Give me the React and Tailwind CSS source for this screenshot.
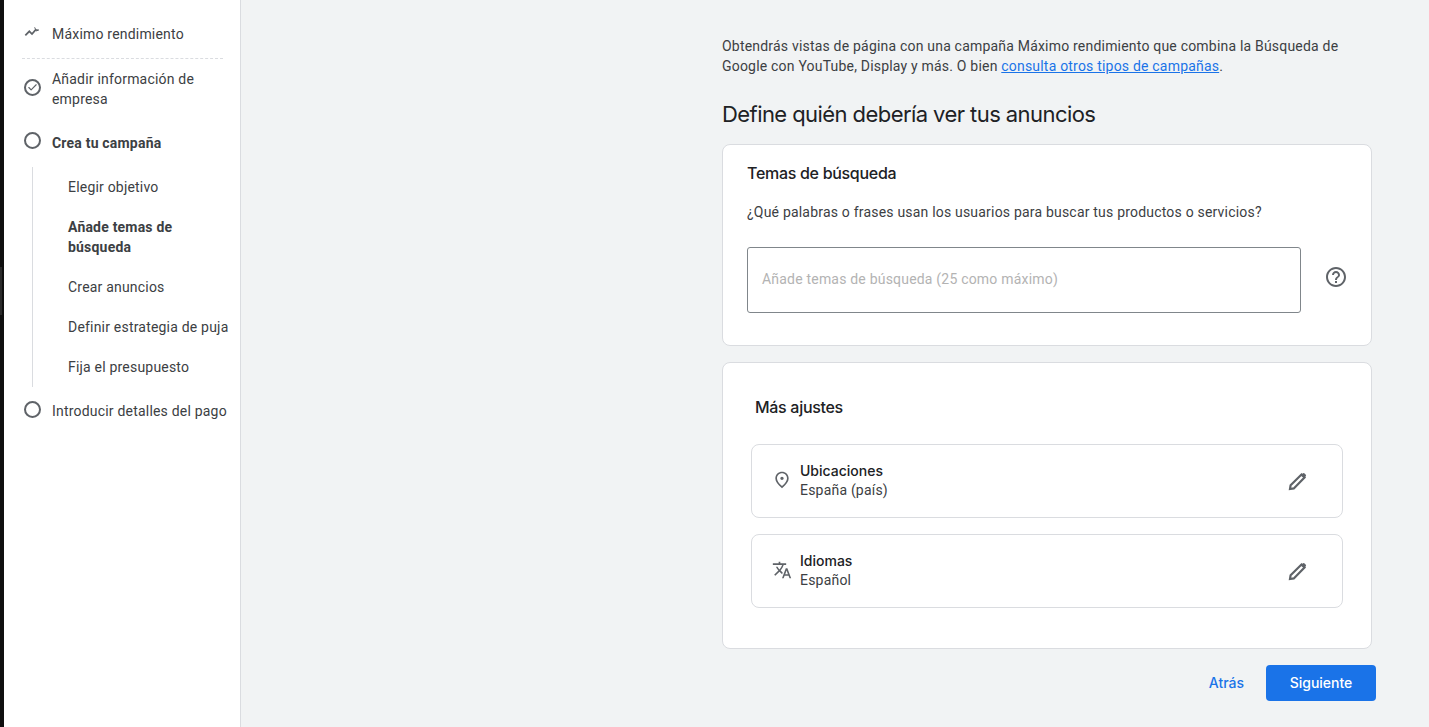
import { Check } from "lucide-react";

const heading = "font-['Inter',sans-serif]";

const Circle = ({ checked }) => (
  <span className="relative -top-[2px] w-[17px] h-[17px] rounded-full border-2 border-[#5f6368] flex items-center justify-center shrink-0">
    {checked && <Check size={11} strokeWidth={2.5} className="text-[#5f6368]" />}
  </span>
);

const SubStep = ({ children, bold }) => (
  <div className={`pl-[35px] py-[10px] leading-5 ${bold ? "font-bold" : ""}`}>{children}</div>
);

const Sidebar = () => (
  <div className="w-[237px] shrink-0 bg-white border-r border-[#dadce0] pt-6 pr-[9px] text-sm text-[#3c4043]">
    <div className="flex items-center gap-[12px] pl-[20px] h-5">
      <svg width="16" height="16" viewBox="0 0 24 24" fill="none" stroke="#5f6368" strokeWidth="2.6" className="relative -top-[2px]">
        <path d="M2 17l6-6 4 4 6-7" />
        <path d="M16 5l1.5 3.5L22 9l-3.5 1.5" fill="#5f6368" strokeWidth="1.5" />
      </svg>
      <span>Máximo rendimiento</span>
    </div>
    <div className="ml-[18px] mr-[8px] mt-[14px] border-t border-dashed border-[#dadce0]" />
    <div className="flex items-center gap-[11px] pl-5 mt-[10px] leading-5">
      <Circle checked />
      <span className="w-[175px]">Añadir información de empresa</span>
    </div>
    <div className="flex items-center gap-[11px] pl-5 mt-[23px] leading-5 font-bold">
      <Circle />
      <span className="relative top-px">Crea tu campaña</span>
    </div>
    <div className="ml-7 mt-[15px] border-l border-[#dadce0] whitespace-nowrap">
      <SubStep>Elegir objetivo</SubStep>
      <SubStep bold>
        Añade temas de
        <br />
        búsqueda
      </SubStep>
      <SubStep>Crear anuncios</SubStep>
      <SubStep>Definir estrategia de puja</SubStep>
      <SubStep>Fija el presupuesto</SubStep>
    </div>
    <div className="flex items-center gap-[11px] pl-5 mt-[14px] leading-5">
      <Circle />
      <span className="whitespace-nowrap">Introducir detalles del pago</span>
    </div>
  </div>
);

const Pencil = () => (
  <svg width="20" height="20" viewBox="0 0 20 20" fill="none" className="shrink-0">
    <path d="M2 18l.6-3.8L13.5 3.5l3 3L5.8 17.4 2 18z" stroke="#5f6368" strokeWidth="2.2" />
    <path d="M13 4l1.6-1.6a1.4 1.4 0 0 1 2 0l1 1a1.4 1.4 0 0 1 0 2L16 7z" fill="#5f6368" />
  </svg>
);

const PlaceIcon = () => (
  <svg width="20" height="20" viewBox="0 0 24 24" fill="#5f6368">
    <path d="M12 12c-1.1 0-2-.9-2-2s.9-2 2-2 2 .9 2 2-.9 2-2 2zm6-1.8C18 6.57 15.35 4 12 4s-6 2.57-6 6.2c0 2.34 1.95 5.44 6 9.14 4.05-3.7 6-6.8 6-9.14zM12 2c4.2 0 8 3.22 8 8.2 0 3.32-2.67 7.25-8 11.8-5.33-4.55-8-8.48-8-11.8C4 5.22 7.8 2 12 2z" />
  </svg>
);

const TranslateIcon = () => (
  <svg width="20" height="20" viewBox="0 0 24 24" fill="#5f6368">
    <path d="M12.87 15.07l-2.54-2.51.03-.03c1.74-1.94 2.98-4.17 3.71-6.53H17V4h-7V2H8v2H1v1.99h11.17C11.5 7.92 10.44 9.75 9 11.35 8.07 10.32 7.3 9.19 6.69 8h-2c.73 1.63 1.73 3.17 2.98 4.56l-5.09 5.02L4 19l5-5 3.11 3.11.76-2.04zM18.5 10h-2L12 22h2l1.12-3h4.75L21 22h2l-4.5-12zm-2.62 7l1.62-4.33L19.12 17h-3.24z" />
  </svg>
);

const HelpIcon = () => (
  <svg width="24" height="24" viewBox="0 0 24 24" fill="#5f6368" className="shrink-0 relative -top-[3px]">
    <path d="M11 18h2v-2h-2v2zm1-16C6.48 2 2 6.48 2 12s4.48 10 10 10 10-4.48 10-10S17.52 2 12 2zm0 18c-4.41 0-8-3.59-8-8s3.59-8 8-8 8 3.59 8 8-3.59 8-8 8zm0-14c-2.21 0-4 1.79-4 4h2c0-1.1.9-2 2-2s2 .9 2 2c0 2-3 1.75-3 5h2c0-2.25 3-2.5 3-5 0-2.21-1.79-4-4-4z" />
  </svg>
);

const SettingRow = ({ icon, title, value }) => (
  <div className="h-[74px] border border-[#dadce0] rounded-lg flex items-center pl-[20px] pr-[34px]">
    <div className="w-[28px] shrink-0 relative -top-px">{icon}</div>
    <div className="flex-1 text-sm text-[#3c4043]">
      <div className={`${heading} text-sm leading-[18px] tracking-normal font-medium text-[#202124] relative -top-px`}>{title}</div>
      <div className="leading-[19px]">{value}</div>
    </div>
    <Pencil />
  </div>
);

export default function App() {
  return (
    <div className="h-[727px] flex overflow-hidden bg-[#f1f3f4] tracking-[0.2px] font-['Roboto',sans-serif]">
      <div className="w-[4px] shrink-0 bg-[#0f0f0f]">
        <div className="mt-[267px] h-[48px] w-[2px] bg-[#2a2a2a]" />
      </div>
      <Sidebar />
      <div className="flex-1 pl-[481px] pt-[36px]">
        <div className="w-[650px]">
          <p className="text-sm leading-5 text-[#3c4043]">
            Obtendrás vistas de página con una campaña Máximo rendimiento que combina la Búsqueda de Google con YouTube, Display y más. O bien{" "}
            <a className="text-[#1a73e8] underline">consulta otros tipos de campañas</a>.
          </p>
          <h1 className={`${heading} text-[22px] leading-7 tracking-[-0.57px] text-[#202124] mt-[24px]`}>Define quién debería ver tus anuncios</h1>

          <div className="mt-[16px] h-[202px] bg-white border border-[#dadce0] rounded-lg pl-6 pr-[23px] pt-[18px]">
            <h2 className={`${heading} text-base leading-5 tracking-[-0.3px] font-medium text-[#202124]`}>Temas de búsqueda</h2>
            <p className="mt-[19px] text-sm leading-5 text-[#3c4043]">
              ¿Qué palabras o frases usan los usuarios para buscar tus productos o servicios?
            </p>
            <div className="mt-[25px] flex items-center gap-[22px]">
              <div className="flex-1 h-[66px] border border-[#80868b] rounded-[3px] flex items-center pl-[14px] pb-[2px] mr-px text-sm text-[#b3b3b3]">
                Añade temas de búsqueda (25 como máximo)
              </div>
              <HelpIcon />
            </div>
          </div>

          <div className="mt-4 h-[287px] bg-white border border-[#dadce0] rounded-lg pl-7 pr-7 pt-[34px]">
            <h2 className={`${heading} text-base leading-5 tracking-[-0.3px] font-medium text-[#202124] pl-1`}>Más ajustes</h2>
            <div className="mt-[27px] flex flex-col gap-4">
              <SettingRow icon={<PlaceIcon />} title="Ubicaciones" value="España (país)" />
              <SettingRow icon={<TranslateIcon />} title="Idiomas" value="Español" />
            </div>
          </div>

          <div className="mt-4 -mr-1 flex items-center justify-end gap-[22px]">
            <a className={`${heading} text-sm tracking-normal font-medium text-[#1a73e8]`}>Atrás</a>
            <button className={`${heading} w-[110px] h-9 rounded bg-[#1a73e8] text-white text-sm tracking-normal font-medium`}>Siguiente</button>
          </div>
        </div>
      </div>
    </div>
  );
}
